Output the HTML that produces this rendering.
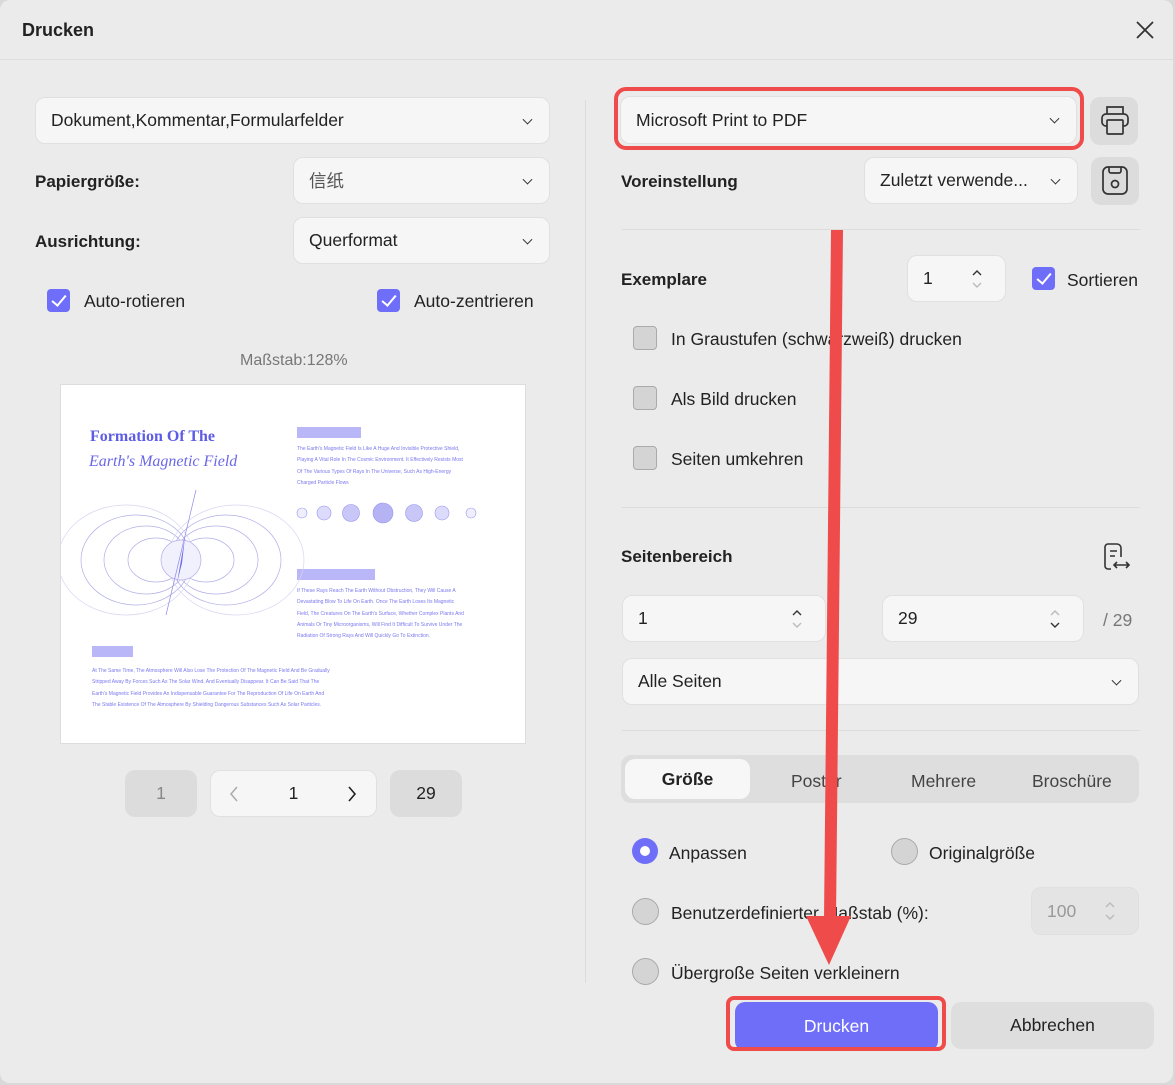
<!DOCTYPE html>
<html><head><meta charset="utf-8"><style>
*{box-sizing:border-box;margin:0;padding:0}
body{width:1175px;height:1085px;background:#d9d9d9;font-family:"Liberation Sans","Noto Sans CJK SC",sans-serif;color:#222;position:relative;overflow:hidden}
.dlg{position:absolute;left:0;top:0;width:1173px;height:1083px;background:#ebebeb;border-radius:10px;overflow:hidden}
.a{position:absolute}
.in{position:absolute;background:#f6f6f6;border:1px solid #e0e0e0;border-radius:10px;font-size:17.5px;color:#222;display:flex;align-items:center;padding-left:15px}
.chev{position:absolute;right:18px;top:50%;width:7px;height:7px;border-right:1.6px solid #333;border-bottom:1.6px solid #333;transform:translateY(-70%) rotate(45deg)}
.lbl{position:absolute;font-weight:bold;font-size:17px;color:#222}
.t{position:absolute;font-size:17.5px;color:#222;white-space:nowrap}
.cb{position:absolute;width:23px;height:23px;border-radius:4px;background:#6f6ef9}
.cb:after{content:"";position:absolute;left:8px;top:3px;width:6px;height:12px;border-right:2.5px solid #fff;border-bottom:2.5px solid #fff;transform:rotate(40deg)}
.ucb{position:absolute;width:24px;height:24px;border-radius:4px;background:#d4d4d4;border:1.5px solid #aaa}
.rad{position:absolute;width:27px;height:27px;border-radius:50%;background:#d4d4d4;border:1.5px solid #a9a9a9}
.sp{position:absolute;right:22px;top:50%;transform:translateY(-50%)}
.hr{position:absolute;height:1px;background:#dcdcdc}
.btn{position:absolute;border-radius:10px;display:flex;align-items:center;justify-content:center;font-size:17.5px}
.pv{color:#7b78ee;font-size:5px;white-space:nowrap;position:absolute}
</style></head><body><div class="dlg">
<div class="a" style="left:0;top:0;width:1173px;height:60px;border-bottom:1px solid #dedede"></div>
<div class="t" style="left:22px;top:20px;font-weight:bold;font-size:18px">Drucken</div>
<svg class="a" style="left:1135px;top:20px" width="20" height="20"><path d="M2 2L18 18M18 2L2 18" stroke="#333" stroke-width="1.8"/></svg>
<div class="a" style="left:585px;top:100px;width:1px;height:883px;background:#dcdcdc"></div>

<div class="in" style="left:35px;top:97px;width:515px;height:47px">Dokument,Kommentar,Formularfelder<span class="chev"></span></div>
<div class="lbl" style="left:35px;top:172px">Papiergröße:</div>
<div class="in" style="left:293px;top:157px;width:257px;height:47px;color:#555">信纸<span class="chev"></span></div>
<div class="lbl" style="left:35px;top:232px">Ausrichtung:</div>
<div class="in" style="left:293px;top:217px;width:257px;height:47px">Querformat<span class="chev"></span></div>
<div class="cb" style="left:47px;top:289px"></div><div class="t" style="left:84px;top:291px">Auto-rotieren</div>
<div class="cb" style="left:377px;top:289px"></div><div class="t" style="left:414px;top:291px">Auto-zentrieren</div>
<div class="t" style="left:240px;top:352px;font-size:16px;color:#777">Maßstab:128%</div>

<div class="a" style="left:60px;top:384px;width:466px;height:360px;background:#fff;border:1px solid #ddd">
 <div class="a" style="left:29px;top:43px;font-family:'Liberation Serif',serif;font-weight:bold;font-size:16px;color:#5e5ce6">Formation Of The</div>
 <div class="a" style="left:28px;top:68px;font-family:'Liberation Serif',serif;font-style:italic;font-size:16px;color:#6a67e8">Earth's Magnetic Field</div>
 <div class="a" style="left:236px;top:42px;width:64px;height:11px;background:#b9b7f7"></div>
 <div class="a" style="left:236px;top:184px;width:78px;height:11px;background:#b9b7f7"></div>
 <div class="a" style="left:31px;top:261px;width:41px;height:11px;background:#b9b7f7"></div>
 <div class="pv" style="left:236px;top:59px;line-height:11.3px">The Earth's Magnetic Field Is Like A Huge And Invisible Protective Shield,<br>Playing A Vital Role In The Cosmic Environment. It Effectively Resists Most<br>Of The Various Types Of Rays In The Universe, Such As High-Energy<br>Charged Particle Flows</div>
 <div class="pv" style="left:236px;top:201px;line-height:11.3px">If These Rays Reach The Earth Without Obstruction, They Will Cause A<br>Devastating Blow To Life On Earth. Once The Earth Loses Its Magnetic<br>Field, The Creatures On The Earth's Surface, Whether Complex Plants And<br>Animals Or Tiny Microorganisms, Will Find It Difficult To Survive Under The<br>Radiation Of Strong Rays And Will Quickly Go To Extinction.</div>
 <div class="pv" style="left:31px;top:281px;line-height:11.3px">At The Same Time, The Atmosphere Will Also Lose The Protection Of The Magnetic Field And Be Gradually<br>Stripped Away By Forces Such As The Solar Wind, And Eventually Disappear. It Can Be Said That The<br>Earth's Magnetic Field Provides An Indispensable Guarantee For The Reproduction Of Life On Earth And<br>The Stable Existence Of The Atmosphere By Shielding Dangerous Substances Such As Solar Particles.</div>
 <svg class="a" style="left:0;top:0" width="466" height="360">
  <g fill="#c9c7f7" stroke="#9896ee" stroke-width="0.6">
   <circle cx="241" cy="128" r="5" fill="#eeeefd"/><circle cx="263" cy="128" r="7" fill="#dcdbfb"/><circle cx="290" cy="128" r="8.5"/><circle cx="322" cy="128" r="10" fill="#b5b3f4"/><circle cx="353" cy="128" r="8.5"/><circle cx="381" cy="128" r="7" fill="#dcdbfb"/><circle cx="410" cy="128" r="5" fill="#eeeefd"/>
  </g>
  <g fill="none" stroke="#b0aee6" stroke-width="0.7" transform="translate(40,0)">
   <ellipse cx="55" cy="175" rx="28" ry="22"/><ellipse cx="105" cy="175" rx="28" ry="22"/>
   <ellipse cx="45" cy="175" rx="42" ry="34"/><ellipse cx="115" cy="175" rx="42" ry="34"/>
   <ellipse cx="35" cy="175" rx="55" ry="45"/><ellipse cx="125" cy="175" rx="55" ry="45"/>
   <ellipse cx="25" cy="175" rx="68" ry="55" stroke="#d6d5f2"/><ellipse cx="135" cy="175" rx="68" ry="55" stroke="#d6d5f2"/>
   <ellipse cx="80" cy="175" rx="20" ry="20" fill="#f1f0fd"/>
   <path d="M95 105L65 230" stroke="#8d8ae8"/>
  </g>
  <path d="M124 152L116 198L121 178Z" fill="#6d6aea"/>
 </svg>
</div>

<div class="btn" style="left:125px;top:770px;width:72px;height:47px;background:#dcdcdc;color:#888">1</div>
<div class="btn" style="left:210px;top:770px;width:167px;height:47px;background:#f6f6f6;border:1px solid #e0e0e0">1</div>
<svg class="a" style="left:228px;top:785px" width="12" height="18"><path d="M9 2L3 9L9 16" fill="none" stroke="#aaa" stroke-width="1.5"/></svg>
<svg class="a" style="left:346px;top:785px" width="12" height="18"><path d="M3 2L9 9L3 16" fill="none" stroke="#222" stroke-width="1.6"/></svg>
<div class="btn" style="left:390px;top:770px;width:72px;height:47px;background:#dcdcdc">29</div>

<div class="in" style="left:620px;top:96px;width:457px;height:48px">Microsoft Print to PDF<span class="chev"></span></div>
<div class="a" style="left:614px;top:87px;width:470px;height:63px;border:4.5px solid #ef4b4b;border-radius:12px"></div>
<div class="a" style="left:1090px;top:97px;width:48px;height:48px;background:#dcdcdc;border-radius:10px"></div>
<svg class="a" style="left:1099px;top:103px" width="32" height="36"><g fill="none" stroke="#333" stroke-width="1.7"><path d="M8 11V4h16v7"/><rect x="3" y="11" width="26" height="12" rx="4"/><rect x="8" y="17" width="16" height="14" rx="1" fill="#dcdcdc"/></g></svg>
<div class="lbl" style="left:621px;top:172px">Voreinstellung</div>
<div class="in" style="left:864px;top:157px;width:214px;height:47px">Zuletzt verwende...<span class="chev"></span></div>
<div class="a" style="left:1091px;top:157px;width:48px;height:48px;background:#dcdcdc;border-radius:10px"></div>
<svg class="a" style="left:1101px;top:165px" width="28" height="32"><g fill="none" stroke="#333" stroke-width="1.7"><rect x="2" y="2" width="24" height="27" rx="5"/><path d="M8 2v4a2 2 0 002 2h8a2 2 0 002-2V2"/><circle cx="14" cy="19" r="3.5"/></g></svg>
<div class="hr" style="left:622px;top:229px;width:518px"></div>

<div class="lbl" style="left:621px;top:270px">Exemplare</div>
<div class="in" style="left:907px;top:255px;width:99px;height:47px">1<svg class="sp" width="12" height="22"><path d="M2 7l4-4 4 4" fill="none" stroke="#333" stroke-width="1.4"/><path d="M2 15l4 4 4-4" fill="none" stroke="#bbb" stroke-width="1.4"/></svg></div>
<div class="cb" style="left:1032px;top:267px"></div><div class="t" style="left:1067px;top:270px">Sortieren</div>
<div class="ucb" style="left:633px;top:326px"></div><div class="t" style="left:671px;top:329px">In Graustufen (schwarzweiß) drucken</div>
<div class="ucb" style="left:633px;top:386px"></div><div class="t" style="left:671px;top:389px">Als Bild drucken</div>
<div class="ucb" style="left:633px;top:446px"></div><div class="t" style="left:671px;top:449px">Seiten umkehren</div>
<div class="hr" style="left:622px;top:507px;width:518px"></div>

<div class="lbl" style="left:621px;top:547px">Seitenbereich</div>
<svg class="a" style="left:1102px;top:542px" width="30" height="30"><g fill="none" stroke="#333" stroke-width="1.6"><path d="M9 27H6a3 3 0 01-3-3V5a3 3 0 013-3h9a4 4 0 014 4v9"/><path d="M8 9h7M8 14h5M12 23h15M15 20l-3 3 3 3M24 20l3 3-3 3"/></g></svg>
<div class="in" style="left:622px;top:595px;width:204px;height:47px">1<svg class="sp" width="12" height="22"><path d="M2 7l4-4 4 4" fill="none" stroke="#333" stroke-width="1.4"/><path d="M2 15l4 4 4-4" fill="none" stroke="#bbb" stroke-width="1.4"/></svg></div>
<div class="in" style="left:882px;top:595px;width:202px;height:47px">29<svg class="sp" width="12" height="22"><path d="M2 7l4-4 4 4" fill="none" stroke="#bbb" stroke-width="1.4"/><path d="M2 15l4 4 4-4" fill="none" stroke="#333" stroke-width="1.4"/></svg></div>
<div class="t" style="left:1103px;top:610px;color:#777">/ 29</div>
<div class="in" style="left:622px;top:658px;width:517px;height:47px">Alle Seiten<span class="chev"></span></div>
<div class="hr" style="left:622px;top:730px;width:518px"></div>

<div class="a" style="left:621px;top:755px;width:518px;height:48px;background:#dedede;border-radius:10px"></div>
<div class="btn" style="left:625px;top:759px;width:125px;height:40px;background:#f7f7f7;font-weight:bold">Größe</div>
<div class="t" style="left:791px;top:771px;color:#444">Poster</div>
<div class="t" style="left:911px;top:771px;color:#444">Mehrere</div>
<div class="t" style="left:1032px;top:771px;color:#444">Broschüre</div>

<div class="a" style="left:632px;top:838px;width:26px;height:26px;border-radius:50%;background:#6f6ef9"></div>
<div class="a" style="left:640px;top:846px;width:10px;height:10px;border-radius:50%;background:#fff"></div>
<div class="t" style="left:669px;top:843px">Anpassen</div>
<div class="rad" style="left:891px;top:838px"></div><div class="t" style="left:929px;top:843px">Originalgröße</div>
<div class="rad" style="left:632px;top:898px"></div><div class="t" style="left:671px;top:903px">Benutzerdefinierter Maßstab (%):</div>
<div class="in" style="left:1031px;top:887px;width:108px;height:48px;background:#e4e4e4;color:#999">100<svg class="sp" width="12" height="22"><path d="M2 7l4-4 4 4" fill="none" stroke="#bbb" stroke-width="1.4"/><path d="M2 15l4 4 4-4" fill="none" stroke="#bbb" stroke-width="1.4"/></svg></div>
<div class="rad" style="left:632px;top:958px"></div><div class="t" style="left:671px;top:963px">Übergroße Seiten verkleinern</div>

<div class="btn" style="left:735px;top:1002px;width:203px;height:49px;background:#6f6ef9;color:#fff">Drucken</div>
<div class="a" style="left:726px;top:996px;width:220px;height:55px;border:4.5px solid #ef4b4b;border-radius:8px"></div>
<div class="btn" style="left:951px;top:1002px;width:203px;height:47px;background:#dedede">Abbrechen</div>

<svg class="a" style="left:0;top:0" width="1175" height="1085"><path d="M831 230L843 230L836 920L824 920Z" fill="#ef4b4b"/><path d="M806 916L851 916L829 965Z" fill="#ef4b4b"/></svg>
</div></body></html>
